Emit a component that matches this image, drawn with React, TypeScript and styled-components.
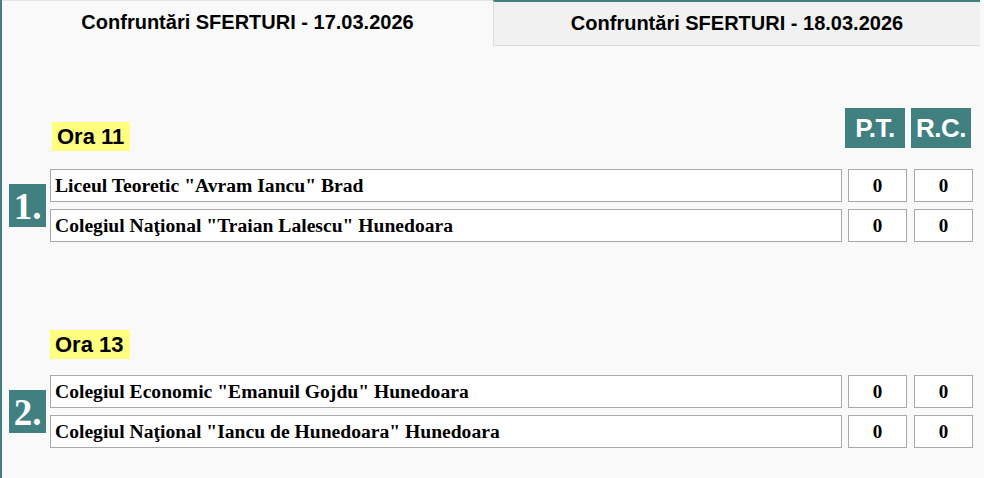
import React from "react";
import styled, { createGlobalStyle } from "styled-components";

const Global = createGlobalStyle`
  html, body { margin: 0; padding: 0; background: #f9f9f9; }
  * { box-sizing: border-box; }
`;

const TEAL = "#408080";

const Page = styled.div`
  width: 980px;
  min-height: 478px;
  background: #f9f9f9;
  border-left: 2px solid ${TEAL};
  display: flex;
  flex-direction: column;
`;

const TabBar = styled.div`
  display: flex;
  height: 46px;
`;

const Tab = styled.div<{ $active?: boolean }>`
  flex: ${(p) => (p.$active ? "0 0 491px" : "1")};
  display: flex;
  align-items: center;
  justify-content: center;
  font-family: "Liberation Sans", Arial, sans-serif;
  font-weight: bold;
  font-size: 20px;
  color: #000;
  background: ${(p) => (p.$active ? "#f9f9f9" : "#f1f1f1")};
  border-top: ${(p) => (p.$active ? "1px solid #e4e4e4" : `2px solid ${TEAL}`)};
  border-left: ${(p) => (p.$active ? "none" : "1px solid #dcdcdc")};
  border-bottom: ${(p) => (p.$active ? "1px solid transparent" : "1px solid #dcdcdc")};
  padding-bottom: ${(p) => (p.$active ? "2px" : "0")};
`;

const Content = styled.div`
  padding: 62px 7px 0 7px;
  display: flex;
  flex-direction: column;
`;

const Section = styled.section<{ $top: number }>`
  margin-top: ${(p) => p.$top}px;
  display: flex;
  flex-direction: column;
`;

const SectionHeader = styled.div`
  display: flex;
  justify-content: space-between;
  align-items: flex-start;
`;

const Hour = styled.div<{ $top: number; $left: number }>`
  margin-top: ${(p) => p.$top}px;
  margin-left: ${(p) => p.$left}px;
  background: #ffff80;
  height: 29px;
  padding: 0 6px 0 5px;
  display: flex;
  align-items: center;
  font-family: "Liberation Sans", Arial, sans-serif;
  font-weight: bold;
  font-size: 22px;
  color: #000;
`;

const ColHeads = styled.div`
  display: flex;
  gap: 6px;
  margin-right: 2px;
`;

const ColHead = styled.div`
  width: 60px;
  height: 40px;
  background: ${TEAL};
  color: #fff;
  display: flex;
  align-items: center;
  justify-content: center;
  font-family: "Liberation Sans", Arial, sans-serif;
  font-weight: bold;
  font-size: 26px;
  letter-spacing: -0.5px;
`;

const Match = styled.div<{ $top: number }>`
  margin-top: ${(p) => p.$top}px;
  display: flex;
  align-items: center;
`;

const Badge = styled.div`
  width: 37px;
  height: 43px;
  margin-right: 4px;
  background: ${TEAL};
  color: #fff;
  display: flex;
  align-items: center;
  justify-content: center;
  font-family: "Liberation Serif", "Times New Roman", serif;
  font-weight: bold;
  font-size: 37px;
  line-height: 1;
  padding-top: 2px;
`;

const Rows = styled.div`
  flex: 1;
  display: flex;
  flex-direction: column;
  gap: 7px;
`;

const Row = styled.div`
  display: flex;
  gap: 6px;
`;

const Cell = styled.div<{ $score?: boolean }>`
  height: 33px;
  background: #fff;
  border: 1px solid #a9a9a9;
  display: flex;
  align-items: center;
  justify-content: ${(p) => (p.$score ? "center" : "flex-start")};
  padding-left: ${(p) => (p.$score ? "0" : "4px")};
  font-family: "Liberation Serif", "Times New Roman", serif;
  font-weight: bold;
  font-size: ${(p) => (p.$score ? "19px" : "19.6px")};
  color: #000;
  ${(p) => (p.$score ? "width: 59px;" : "flex: 1;")}
  &:last-child { margin-left: ${(p) => (p.$score ? "1px" : "0")}; }
`;

type Team = { name: string; pt: number; rc: number };
type MatchData = {
  no: number;
  hour: string;
  teams: Team[];
};

const matches: MatchData[] = [
  {
    no: 1,
    hour: "Ora 11",
    teams: [
      { name: 'Liceul Teoretic "Avram Iancu" Brad', pt: 0, rc: 0 },
      { name: 'Colegiul Naţional "Traian Lalescu" Hunedoara', pt: 0, rc: 0 },
    ],
  },
  {
    no: 2,
    hour: "Ora 13",
    teams: [
      { name: 'Colegiul Economic "Emanuil Gojdu" Hunedoara', pt: 0, rc: 0 },
      { name: 'Colegiul Naţional "Iancu de Hunedoara" Hunedoara', pt: 0, rc: 0 },
    ],
  },
];

export default function App() {
  return (
    <>
      <Global />
      <Page>
        <TabBar>
          <Tab $active>Confruntări SFERTURI - 17.03.2026</Tab>
          <Tab>Confruntări SFERTURI - 18.03.2026</Tab>
        </TabBar>
        <Content>
          {matches.map((m, i) => (
            <Section key={m.no} $top={i === 0 ? 0 : 88}>
              <SectionHeader>
                <Hour $top={i === 0 ? 14 : 0} $left={i === 0 ? 43 : 41}>
                  {m.hour}
                </Hour>
                {i === 0 && (
                  <ColHeads>
                    <ColHead>P.T.</ColHead>
                    <ColHead>R.C.</ColHead>
                  </ColHeads>
                )}
              </SectionHeader>
              <Match $top={i === 0 ? 18 : 16}>
                <Badge>{m.no}.</Badge>
                <Rows>
                  {m.teams.map((t) => (
                    <Row key={t.name}>
                      <Cell>{t.name}</Cell>
                      <Cell $score>{t.pt}</Cell>
                      <Cell $score>{t.rc}</Cell>
                    </Row>
                  ))}
                </Rows>
              </Match>
            </Section>
          ))}
        </Content>
      </Page>
    </>
  );
}
